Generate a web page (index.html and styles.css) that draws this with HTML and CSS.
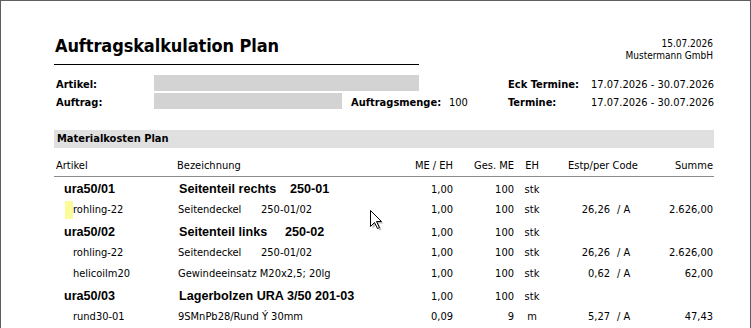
FILE: index.html
```html
<!DOCTYPE html>
<html lang="de">
<head>
<meta charset="utf-8">
<title>Auftragskalkulation Plan</title>
<link rel="stylesheet" href="styles.css">
</head>
<body>
<div class="frame">
  <div class="page">
    <header class="top">
      <div class="title-wrap">
        <h1 class="title">Auftragskalkulation Plan</h1>
      </div>
      <div class="meta">
        <div>15.07.2026</div>
        <div>Mustermann GmbH</div>
      </div>
    </header>

    <div class="info">
      <div class="lbl">Artikel:</div>
      <div class="box box-long"></div>
      <div class="lbl lbl3">Eck Termine:</div>
      <div class="val3">17.07.2026 - 30.07.2026</div>

      <div class="lbl">Auftrag:</div>
      <div class="box box-short"></div>
      <div class="lbl">Auftragsmenge:</div>
      <div class="val2">100</div>
      <div class="lbl lbl3">Termine:</div>
      <div class="val3">17.07.2026 - 30.07.2026</div>
    </div>

    <div class="section">Materialkosten Plan</div>

    <div class="row thead">
      <div class="c-art">Artikel</div>
      <div class="c-bez">Bezeichnung</div>
      <div class="c-num">ME / EH</div>
      <div class="c-num">Ges. ME</div>
      <div class="c-eh">EH</div>
      <div class="c-estp-h">Estp/per Code</div>
      <div class="c-sum">Summe</div>
    </div>

    <div class="group">
      <div class="row head">
        <div class="c-art">ura50/01</div>
        <div class="c-bez"><span class="bname">Seitenteil rechts</span><span class="bnr">250-01</span></div>
        <div class="c-num">1,00</div>
        <div class="c-num">100</div>
        <div class="c-eh">stk</div>
        <div class="c-estp"></div>
        <div class="c-sum"></div>
      </div>
      <div class="row sub">
        <div class="c-art"><span class="mark mark-on"></span>rohling-22</div>
        <div class="c-bez"><span class="sname">Seitendeckel</span>250-01/02</div>
        <div class="c-num">1,00</div>
        <div class="c-num">100</div>
        <div class="c-eh">stk</div>
        <div class="c-estp"><span class="price">26,26</span><span class="code">/ A</span></div>
        <div class="c-sum">2.626,00</div>
      </div>
    </div>

    <div class="group">
      <div class="row head">
        <div class="c-art">ura50/02</div>
        <div class="c-bez"><span class="bname bname-l">Seitenteil links</span><span class="bnr">250-02</span></div>
        <div class="c-num">1,00</div>
        <div class="c-num">100</div>
        <div class="c-eh">stk</div>
        <div class="c-estp"></div>
        <div class="c-sum"></div>
      </div>
      <div class="row sub">
        <div class="c-art"><span class="mark"></span>rohling-22</div>
        <div class="c-bez"><span class="sname">Seitendeckel</span>250-01/02</div>
        <div class="c-num">1,00</div>
        <div class="c-num">100</div>
        <div class="c-eh">stk</div>
        <div class="c-estp"><span class="price">26,26</span><span class="code">/ A</span></div>
        <div class="c-sum">2.626,00</div>
      </div>
      <div class="row sub">
        <div class="c-art"><span class="mark"></span>helicoilm20</div>
        <div class="c-bez">Gewindeeinsatz M20x2,5; 20lg</div>
        <div class="c-num">1,00</div>
        <div class="c-num">100</div>
        <div class="c-eh">stk</div>
        <div class="c-estp"><span class="price">0,62</span><span class="code">/ A</span></div>
        <div class="c-sum">62,00</div>
      </div>
    </div>

    <div class="group">
      <div class="row head">
        <div class="c-art">ura50/03</div>
        <div class="c-bez"><span class="bname">Lagerbolzen URA 3/50 201-03</span></div>
        <div class="c-num">1,00</div>
        <div class="c-num">100</div>
        <div class="c-eh">stk</div>
        <div class="c-estp"></div>
        <div class="c-sum"></div>
      </div>
      <div class="row sub">
        <div class="c-art"><span class="mark"></span>rund30-01</div>
        <div class="c-bez">9SMnPb28/Rund Ý 30mm</div>
        <div class="c-num">0,09</div>
        <div class="c-num">9</div>
        <div class="c-eh">m</div>
        <div class="c-estp"><span class="price">5,27</span><span class="code">/ A</span></div>
        <div class="c-sum">47,43</div>
      </div>
    </div>
  </div>

  <svg class="cursor" width="14" height="21" viewBox="0 0 14 21" aria-hidden="true">
    <path d="M2.5 2.5 L2.5 18.5 L6.5 14.5 L9.5 20.5 L11.5 19.5 L8.5 13.5 L13.5 13.5 Z" fill="#bdbdbd" stroke="none"/>
    <path d="M0.5 0.5 L0.5 16.5 L4.5 12.5 L7.5 18.5 L9.5 17.5 L6.5 11.5 L11.5 11.5 Z" fill="#ffffff" stroke="#000" stroke-width="1" stroke-linejoin="miter"/>
  </svg>
</div>
</body>
</html>
```

FILE: styles.css
```css
* { box-sizing: border-box; }

html, body {
  margin: 0;
  padding: 0;
  background: #fff;
}

body {
  font-family: "DejaVu Sans Condensed", "DejaVu Sans", sans-serif;
  font-size: 11px;
  color: #000;
}

.frame {
  position: relative;
  width: 751px;
  height: 328px;
  border-top: 1px solid #5f5f5f;
  border-left: 1px solid #5f5f5f;
  border-right: 1px solid #5f5f5f;
  overflow: hidden;
}

.page {
  width: 660px;
  margin-left: 53px;
  padding-top: 34px;
}

/* header */
.top {
  display: flex;
  justify-content: space-between;
  align-items: flex-start;
}

.title-wrap {
  width: 365px;
  border-bottom: 1px solid #000;
  padding: 0 0 7px 1px;
}

.title {
  margin: 0;
  font-family: "DejaVu Sans Condensed", "DejaVu Sans", sans-serif;
  font-weight: bold;
  font-size: 18px;
  line-height: 22px;
  letter-spacing: -0.1px;
}

.meta {
  text-align: right;
  font-size: 10px;
  line-height: 12px;
  padding-top: 3px;
  padding-right: 1px;
}

/* info block */
.info {
  display: grid;
  grid-template-columns: 100px 195px 100px 57px 85px 1fr;
  grid-auto-rows: 18px;
  margin-top: 10px;
  align-items: center;
  white-space: nowrap;
}

.lbl {
  font-weight: bold;
  padding-left: 2px;
}

.box {
  height: 16px;
  background: #d3d3d3;
  align-self: start;
}

.box-long {
  grid-column: 2 / span 3;
  width: 265px;
}

.box-short {
  width: 188px;
}

.lbl3 {
  grid-column: 5;
}

.val3 {
  justify-self: end;
  padding-right: 1px;
}

/* section bar */
.section {
  margin-top: 19px;
  height: 18px;
  line-height: 18px;
  background: #e0e0e0;
  font-weight: bold;
  padding-left: 3px;
}

/* table rows */
.row {
  display: grid;
  grid-template-columns: 123px 223px 53px 61px 36px 107px 57px;
  align-items: center;
  white-space: nowrap;
}

.thead {
  height: 29px;
  padding-top: 7px;
  border-bottom: 1px solid #8c8c8c;
  margin-bottom: 2px;
}

.thead .c-art { padding-left: 2px; }
.thead .c-bez { padding-left: 0; }

.c-num { text-align: right; }
.c-eh { text-align: center; }
.c-sum { text-align: right; padding-right: 1px; }

.c-estp-h { padding-left: 18px; }

.c-estp {
  display: flex;
}

.price {
  width: 60px;
  text-align: right;
}

.code {
  margin-left: 7px;
}

.group + .group { margin-top: 2px; }

.head { height: 20px; }
.sub { height: 21px; }

.head .c-art {
  font-family: "Liberation Sans", Arial, sans-serif;
  font-weight: bold;
  font-size: 12.6px;
  padding-left: 10px;
}

.head .c-bez {
  font-family: "Liberation Sans", Arial, sans-serif;
  font-weight: bold;
  font-size: 12.6px;
  padding-left: 2px;
}

.bname { display: inline-block; width: 111px; }
.bname-l { width: 106px; }
.bname:only-child { width: auto; }

.sub .c-art {
  display: flex;
  align-items: center;
  padding-left: 11px;
}

.sub .c-bez { padding-left: 1px; }

.sname { display: inline-block; width: 83px; }

.mark {
  display: inline-block;
  width: 8px;
  height: 18px;
}

.mark-on { background: #fbfb9a; }

.cursor {
  position: absolute;
  left: 369px;
  top: 209px;
}
```
